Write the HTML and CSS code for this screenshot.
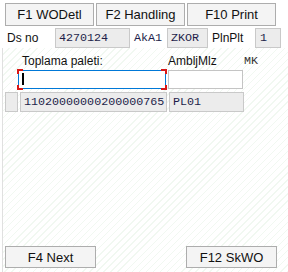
FILE: index.html
```html
<!DOCTYPE html>
<html lang="tr">
<head>
  <meta charset="UTF-8"/>
  <meta name="viewport" content="width=device-width, initial-scale=1.0"/>
  <title>Toplama</title>
  <link rel="stylesheet" href="styles.css">
</head>
<body>
<div class="screen">
  <div class="toolbar">
    <button class="btn">F1 WODetl</button>
    <button class="btn">F2 Handling</button>
    <button class="btn">F10 Print</button>
  </div>
  <div class="info-row">
    <span class="lbl lbl-ds">Ds no</span>
    <span class="field f-ds">4270124</span>
    <span class="mono-lbl">AkA1</span>
    <span class="field f-zkor">ZKOR</span>
    <span class="lbl lbl-pln">PlnPlt</span>
    <span class="field f-one">1</span>
  </div>
  <div class="panel">
    <div class="head-row">
      <span class="lbl col-main">Toplama paleti:</span>
      <span class="lbl col-amb">AmbljMlz</span>
      <span class="mono-lbl col-mk">MK</span>
    </div>
    <div class="input-row">
      <div class="focus-wrap">
        <div class="input active"><span class="caret"></span></div>
      </div>
      <div class="input small"></div>
    </div>
    <div class="data-row">
      <span class="field sel"></span>
      <span class="field f-code">11020000000200000765</span>
      <span class="field f-amb">PL01</span>
    </div>
    <div class="bottom-bar">
      <button class="btn btn-wide">F4 Next</button>
      <button class="btn btn-wide">F12 SkWO</button>
    </div>
  </div>
</div>
</body>
</html>
```

FILE: styles.css
```css
html, body {
  margin: 0;
  padding: 0;
  background: #fff;
}
.screen {
  width: 288px;
  height: 272px;
  display: flex;
  flex-direction: column;
  font-family: "Liberation Sans", Arial, sans-serif;
  font-size: 12px;
  color: #111;
  overflow: hidden;
}
.toolbar {
  display: flex;
  gap: 2px;
  padding: 3px 0 0 5px;
}
.btn {
  width: 89px;
  height: 23px;
  padding: 0;
  margin: 0;
  background: #f4f4f4;
  border: 1px solid #adadad;
  border-radius: 0;
  font-family: "Liberation Sans", Arial, sans-serif;
  font-size: 13px;
  color: #111;
}
.info-row {
  display: flex;
  align-items: center;
  height: 20px;
  margin-top: 2px;
}
.lbl {
  font-size: 12px;
  color: #111;
}
.lbl-ds {
  width: 48px;
  padding-left: 7px;
}
.mono-lbl {
  font-family: "Liberation Mono", "Courier New", monospace;
  font-size: 11.7px;
  color: #1e1e4a;
}
.info-row .mono-lbl {
  width: 33px;
  padding-left: 4px;
}
.lbl-pln {
  width: 43px;
  padding-left: 4px;
}
.field {
  box-sizing: border-box;
  height: 20px;
  line-height: 18px;
  padding-left: 3px;
  background: #ececec;
  border: 1px solid #c9c9c9;
  font-family: "Liberation Mono", "Courier New", monospace;
  font-size: 11.7px;
  color: #1e1e4a;
}
.f-ds {
  width: 75px;
}
.f-zkor {
  width: 41px;
  padding-left: 3px;
}
.f-one {
  width: 26px;
  padding-left: 4px;
}
.panel {
  flex: 1;
  display: flex;
  flex-direction: column;
  margin-left: 2px;
  border-left: 1px solid #e0e0e0;
  background: repeating-linear-gradient(135deg, #fff 0, #fff 4px, #f1f8f1 4px, #f1f8f1 5px);
}
.head-row {
  display: flex;
  height: 20px;
  align-items: flex-end;
}
.col-main {
  width: 146px;
  padding-left: 19px;
}
.col-amb {
  width: 76px;
}
.col-mk {
  color: #333;
}
.input-row {
  display: flex;
  gap: 2px;
  margin-top: 2px;
  padding-left: 15px;
}
.focus-wrap {
  position: relative;
}
.focus-wrap::before {
  content: "";
  position: absolute;
  inset: -1px;
  pointer-events: none;
  background:
    linear-gradient(#d81818, #d81818) left top / 2px 5px no-repeat,
    linear-gradient(#d81818, #d81818) left top / 6px 2px no-repeat,
    linear-gradient(#d81818, #d81818) left bottom / 2px 5px no-repeat,
    linear-gradient(#d81818, #d81818) left bottom / 6px 2px no-repeat,
    linear-gradient(#d81818, #d81818) right top / 2px 5px no-repeat,
    linear-gradient(#d81818, #d81818) right top / 6px 2px no-repeat,
    linear-gradient(#d81818, #d81818) right bottom / 2px 5px no-repeat,
    linear-gradient(#d81818, #d81818) right bottom / 6px 2px no-repeat;
}
.input {
  box-sizing: border-box;
  height: 19px;
  background: #fff;
  border: 1px solid #c4c4c4;
}
.input.active {
  width: 148px;
  border-color: #0078d7;
  padding: 2px 0 0 3px;
}
.input.small {
  width: 75px;
}
.caret {
  display: block;
  width: 2px;
  height: 12px;
  background: #000;
}
.data-row {
  display: flex;
  gap: 2px;
  margin-top: 3px;
  padding-left: 2px;
}
.sel {
  width: 13px;
  padding: 0;
}
.f-code {
  width: 147px;
}
.f-amb {
  width: 75px;
}
.bottom-bar {
  display: flex;
  justify-content: space-between;
  margin-top: auto;
  margin-bottom: 4px;
  padding: 0 11px 0 2px;
}
.btn-wide {
  width: 91px;
  height: 22px;
}
```
